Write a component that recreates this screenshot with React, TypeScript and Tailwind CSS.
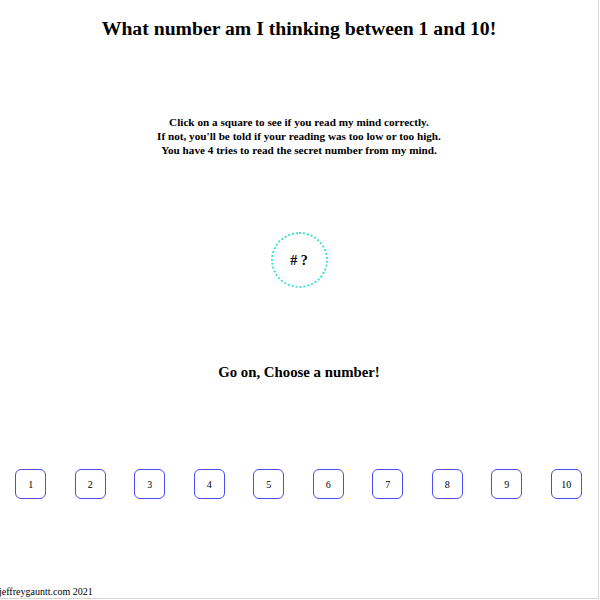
export default function App() {
  const nums = [1, 2, 3, 4, 5, 6, 7, 8, 9, 10]
  return (
    <div className="w-[599px] h-[599px] bg-white border-r border-b border-[#d6d6d6] flex flex-col text-black font-['Liberation_Serif',serif]">
      <h1 className="mt-[16px] text-[19.7px] leading-[24px] font-bold text-center">
        What number am I thinking between 1 and 10!
      </h1>

      <div className="mt-[75px] text-[11.2px] leading-[14px] font-bold text-center">
        <div>Click on a square to see if you read my mind correctly.</div>
        <div>If not, you'll be told if your reading was too low or too high.</div>
        <div>You have 4 tries to read the secret number from my mind.</div>
      </div>

      {/* guess display */}
      <div className="mt-[75px] mx-auto w-[57px] h-[56px] rounded-full border-2 border-dotted border-[#40e0d0] flex items-center justify-center text-[14px] font-bold">
        # ?
      </div>

      <div className="mt-[74px] text-[14.8px] leading-[20px] font-bold text-center">
        Go on, Choose a number!
      </div>

      <div className="mt-[87px] ml-[1px] w-[595px] grid grid-cols-10">
        {nums.map((n) => (
          <div key={n} className="flex justify-center">
            <button className="w-[31px] h-[30px] rounded-[6px] border border-[#4b4bf5] bg-white text-[10px] flex items-center justify-center">
              {n}
            </button>
          </div>
        ))}
      </div>

      <footer className="mt-auto ml-[-1px] text-[10px] leading-[12px]">
        jeffreygauntt.com 2021
      </footer>
    </div>
  )
}
